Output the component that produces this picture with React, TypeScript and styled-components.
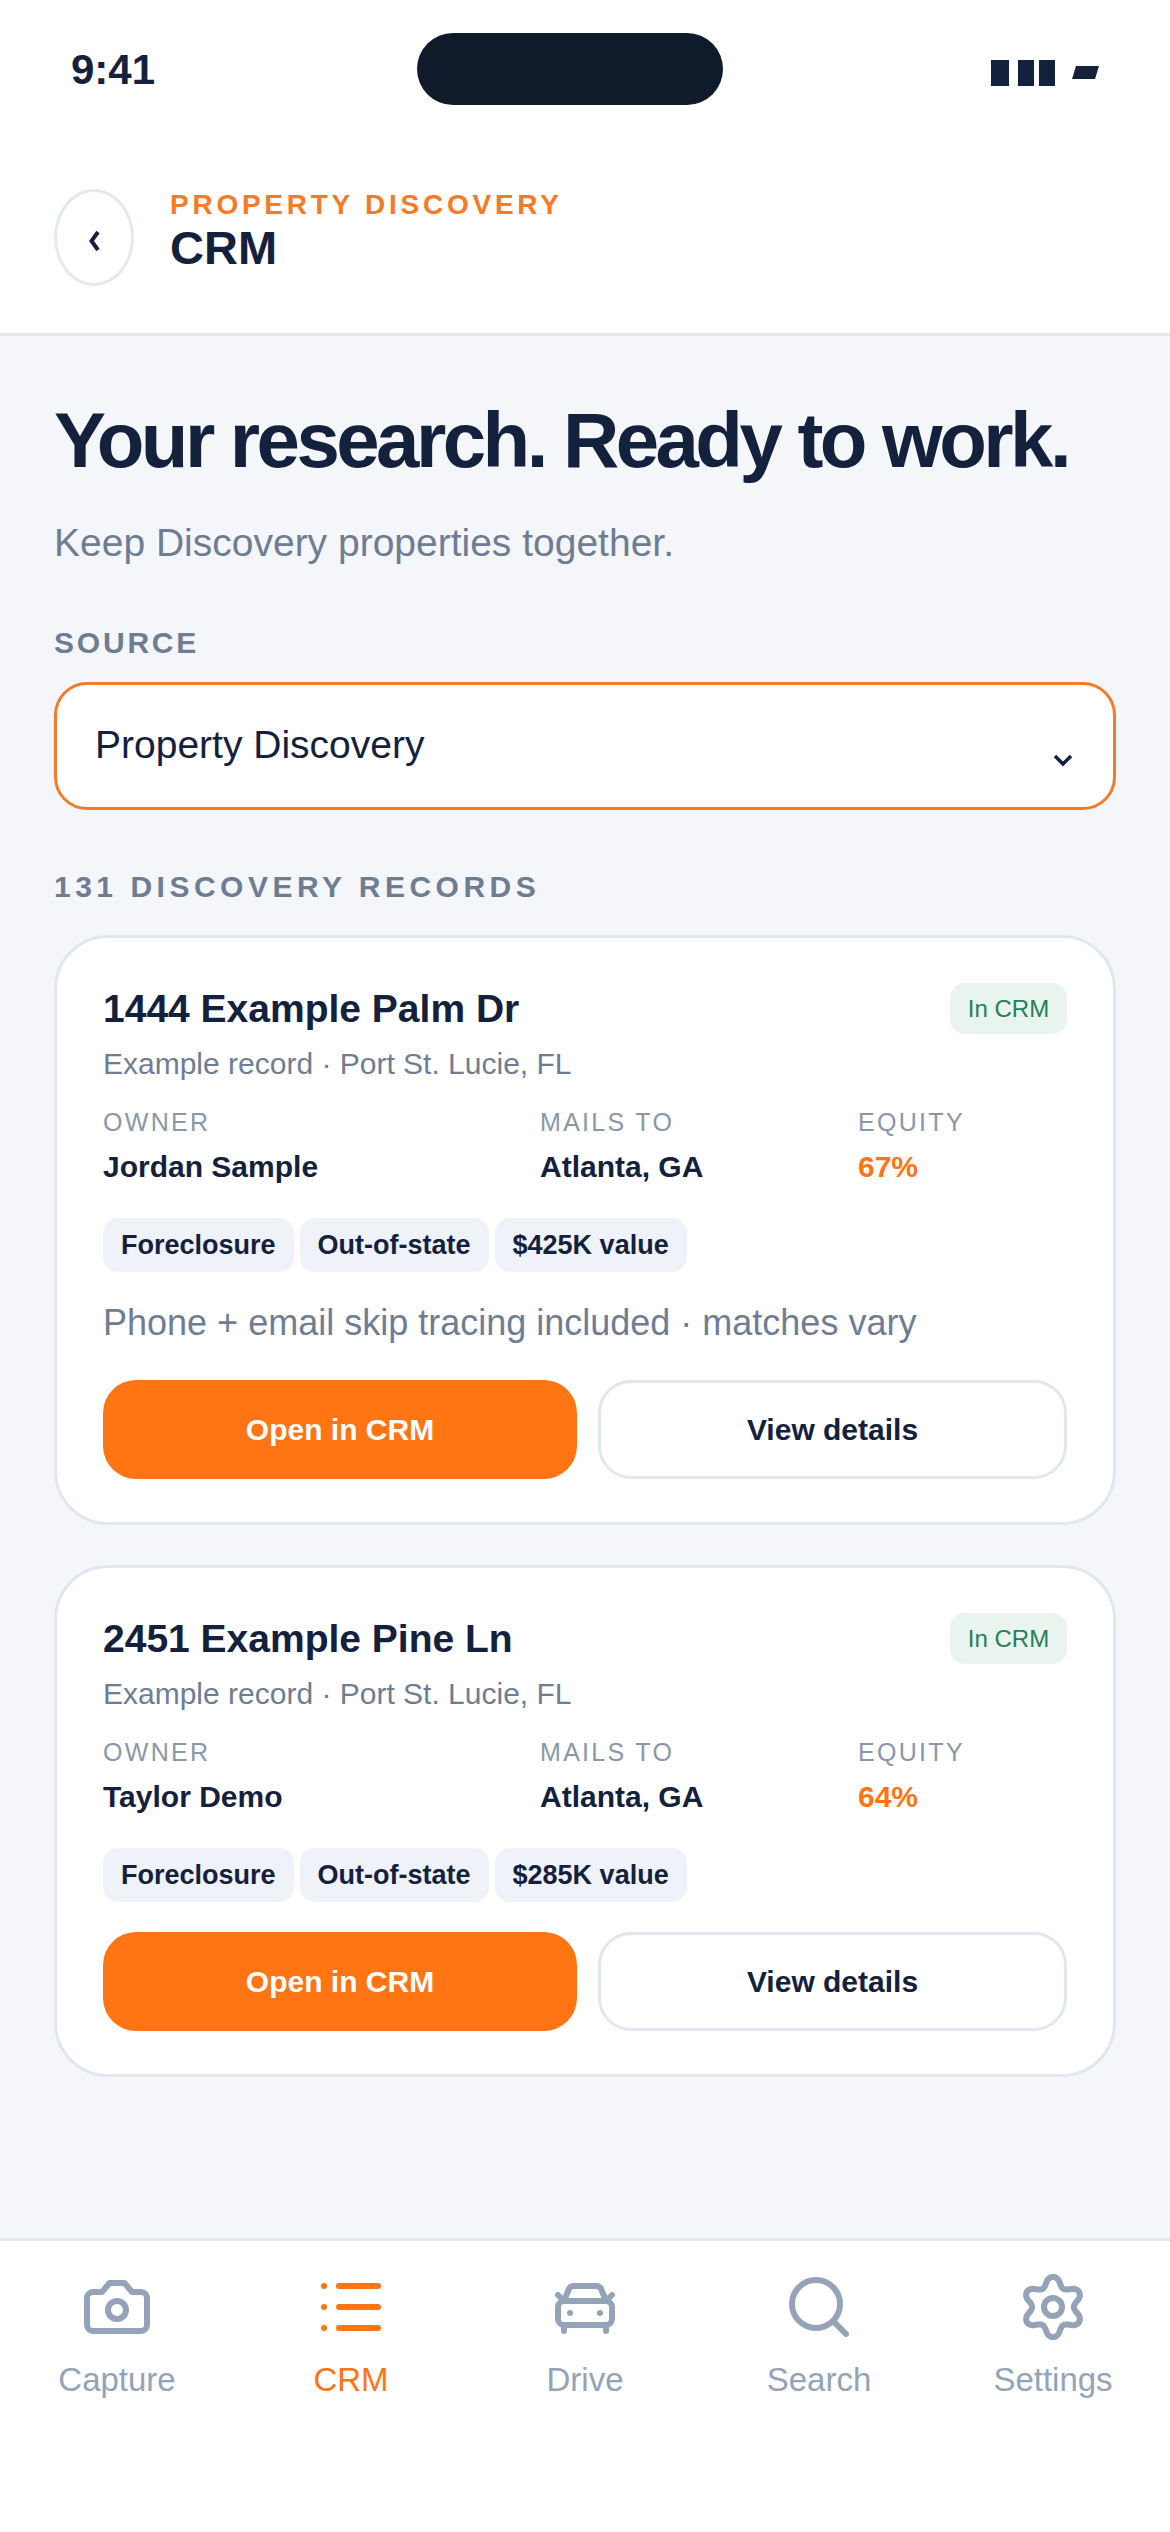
import React from "react";
import styled, { createGlobalStyle } from "styled-components";
import { List, CarFront, Search } from "lucide-react";

const Global = createGlobalStyle`
  * { box-sizing: border-box; }
  html, body { margin: 0; padding: 0; background: #ffffff; }
  body { font-family: "Liberation Sans", Arial, sans-serif; }
`;

const navy = "#14213d";
const orange = "#ff7413";

const Screen = styled.div`
  width: 1170px;
  height: 2532px;
  display: flex;
  flex-direction: column;
  background: #f4f6fa;
  color: ${navy};
  overflow: hidden;
`;

const StatusBar = styled.div`
  height: 117px;
  flex: none;
  background: #fff;
  padding: 33px 71px 0;
  display: grid;
  grid-template-columns: 346px 306px 1fr;
  align-items: start;
`;

const Time = styled.div`
  font-size: 42px;
  line-height: 72px;
  font-weight: 700;
  margin-top: 1px;
`;

const Island = styled.div`
  height: 72px;
  border-radius: 36px;
  background: #0f1a2b;
`;

const StatusIcons = styled.div`
  display: flex;
  justify-content: flex-end;
  padding-top: 27px;
`;

const Signal = styled.svg`
  display: block;
`;

const Header = styled.header`
  height: 219px;
  flex: none;
  background: #fff;
  border-bottom: 3px solid #e4e9f0;
  padding: 72px 54px 0;
  display: flex;
  gap: 36px;
  align-items: flex-start;
`;

const BackButton = styled.button`
  width: 80px;
  height: 97px;
  border-radius: 50%;
  border: 3px solid #e4e9f0;
  background: #fff;
  padding: 7px 0 0;
  display: flex;
  align-items: center;
  justify-content: center;
  flex: none;
  color: ${navy};
`;

const HeaderText = styled.div`
  display: flex;
  flex-direction: column;
`;

const Kicker = styled.div`
  font-size: 28px;
  line-height: 32px;
  font-weight: 700;
  letter-spacing: 3.75px;
  color: #f47b27;
`;

const HeaderTitle = styled.div`
  font-size: 47px;
  line-height: 54px;
  font-weight: 700;
`;

const Main = styled.main`
  flex: 1;
  padding: 0 54px;
  display: flex;
  flex-direction: column;
`;

const Heading = styled.h1`
  margin: 60px 0 0;
  font-size: 78px;
  line-height: 88px;
  letter-spacing: -3.55px;
  font-weight: 700;
  white-space: nowrap;
`;

const Lead = styled.p`
  margin: 36px 0 0;
  font-size: 39px;
  line-height: 46px;
  color: #6f7d94;
`;

const SectionLabel = styled.div<{ $wide?: boolean }>`
  font-size: 30px;
  line-height: 36px;
  font-weight: 700;
  letter-spacing: ${(p) => (p.$wide ? "4.5px" : "2.8px")};
  color: #6f7d94;
`;

const SourceLabel = styled(SectionLabel)`
  margin-top: 59px;
`;

const RecordsLabel = styled(SectionLabel)`
  margin-top: 59px;
`;

const SelectBox = styled.div`
  margin-top: 21px;
  height: 128px;
  border: 3px solid #f47b27;
  border-radius: 33px;
  background: #fff;
  padding: 0 40px 0 38px;
  display: flex;
  align-items: center;
  justify-content: space-between;
  font-size: 39px;
  color: ${navy};
`;

const SelectValue = styled.span`
  margin-bottom: 2px;
`;

const SelectArrow = styled.svg`
  margin-top: 28px;
`;

const Card = styled.article`
  background: #fff;
  border: 3px solid #e1e6ef;
  border-radius: 54px;
  padding: 45px 46px 43px 46px;
  margin-top: 40px;
`;

const FirstCard = styled(Card)`
  margin-top: 30px;
`;

const CardTop = styled.div`
  display: flex;
  justify-content: space-between;
  align-items: flex-start;
`;

const Address = styled.h2`
  margin: 3px 0 0;
  font-size: 39px;
  line-height: 46px;
  font-weight: 700;
`;

const Badge = styled.span`
  width: 117px;
  height: 51px;
  border-radius: 15px;
  background: #e8f4ed;
  color: #24805a;
  font-size: 24px;
  display: flex;
  align-items: center;
  justify-content: center;
`;

const Subline = styled.div`
  margin-top: 12px;
  font-size: 30px;
  line-height: 36px;
  color: #6f7d94;
`;

const Stats = styled.div`
  margin-top: 25px;
  display: grid;
  grid-template-columns: 437px 318px 1fr;
`;

const Stat = styled.div`
  display: flex;
  flex-direction: column;
`;

const StatLabel = styled.span`
  font-size: 25px;
  line-height: 30px;
  letter-spacing: 2.3px;
  color: #8a96a9;
`;

const StatValue = styled.span<{ $accent?: boolean }>`
  margin-top: 12px;
  font-size: 30px;
  line-height: 36px;
  font-weight: 700;
  color: ${(p) => (p.$accent ? orange : navy)};
`;

const Chips = styled.div`
  margin-top: 33px;
  display: flex;
  gap: 6px;
`;

const Chip = styled.span`
  height: 54px;
  border-radius: 15px;
  background: #eff2f8;
  padding: 0 18px;
  font-size: 27px;
  font-weight: 700;
  display: flex;
  align-items: center;
`;

const Note = styled.p`
  margin: 28px 0 0;
  font-size: 36px;
  line-height: 46px;
  color: #6f7d94;
`;

const Actions = styled.div<{ $tight?: boolean }>`
  margin-top: ${(p) => (p.$tight ? "30px" : "34px")};
  display: grid;
  grid-template-columns: 474px 1fr;
  gap: 21px;
`;

const PrimaryButton = styled.button`
  height: 99px;
  border: 0;
  border-radius: 33px;
  background: ${orange};
  color: #fff;
  font: 700 30px "Liberation Sans", Arial, sans-serif;
`;

const SecondaryButton = styled.button`
  height: 99px;
  border: 3px solid #e1e6ef;
  border-radius: 33px;
  background: #fff;
  color: ${navy};
  font: 700 30px "Liberation Sans", Arial, sans-serif;
`;

const BottomNav = styled.nav`
  height: 294px;
  flex: none;
  background: #fff;
  border-top: 3px solid #e4e9f0;
  display: grid;
  grid-template-columns: repeat(5, 1fr);
  padding-top: 30px;
`;

const NavItem = styled.div<{ $active?: boolean }>`
  display: flex;
  flex-direction: column;
  align-items: center;
  color: ${(p) => (p.$active ? orange : "#94a3b8")};
`;

const NavLabel = styled.span`
  margin-top: 17px;
  font-size: 33px;
  line-height: 40px;
`;

const gearPath = (() => {
  const pts: string[] = [];
  for (let i = 0; i < 120; i++) {
    const a = (i / 120) * Math.PI * 2;
    const c = Math.cos(6 * (a + Math.PI / 2));
    const r = 8.5 + 1.55 * Math.sign(c) * Math.pow(Math.abs(c), 0.8);
    pts.push(`${(12 + r * Math.cos(a)).toFixed(2)} ${(12 + r * Math.sin(a)).toFixed(2)}`);
  }
  return `M${pts.join("L")}Z`;
})();

function CameraIcon() {
  return (
    <svg width="72" height="72" viewBox="0 0 24 24" fill="none" stroke="currentColor" strokeWidth="2" strokeLinecap="round" strokeLinejoin="round">
      <path d="M14.5 4h-5L7 7H4a2 2 0 0 0-2 2v9a2 2 0 0 0 2 2h16a2 2 0 0 0 2-2V9a2 2 0 0 0-2-2h-3l-2.5-3z" />
      <circle cx="12" cy="13" r="3" />
    </svg>
  );
}

function GearIcon() {
  return (
    <svg width="72" height="72" viewBox="0 0 24 24" fill="none" stroke="currentColor" strokeWidth="2" strokeLinecap="round" strokeLinejoin="round">
      <path d={gearPath} />
      <circle cx="12" cy="12" r="3" />
    </svg>
  );
}

type Rec = {
  address: string;
  owner: string;
  equity: string;
  value: string;
  note?: string;
};

const records: Rec[] = [
  {
    address: "1444 Example Palm Dr",
    owner: "Jordan Sample",
    equity: "67%",
    value: "$425K value",
    note: "Phone + email skip tracing included · matches vary",
  },
  {
    address: "2451 Example Pine Ln",
    owner: "Taylor Demo",
    equity: "64%",
    value: "$285K value",
  },
];

const navItems = [
  { label: "Capture", icon: <CameraIcon /> },
  { label: "CRM", icon: <List size={72} strokeWidth={2} />, active: true },
  { label: "Drive", icon: <CarFront size={72} strokeWidth={2} /> },
  { label: "Search", icon: <Search size={72} strokeWidth={2} /> },
  { label: "Settings", icon: <GearIcon /> },
];

function RecordBody({ r }: { r: Rec }) {
  return (
    <>
      <CardTop>
        <Address>{r.address}</Address>
        <Badge>In CRM</Badge>
      </CardTop>
      <Subline>Example record · Port St. Lucie, FL</Subline>
      <Stats>
        <Stat>
          <StatLabel>OWNER</StatLabel>
          <StatValue>{r.owner}</StatValue>
        </Stat>
        <Stat>
          <StatLabel>MAILS TO</StatLabel>
          <StatValue>Atlanta, GA</StatValue>
        </Stat>
        <Stat>
          <StatLabel>EQUITY</StatLabel>
          <StatValue $accent>{r.equity}</StatValue>
        </Stat>
      </Stats>
      <Chips>
        <Chip>Foreclosure</Chip>
        <Chip>Out-of-state</Chip>
        <Chip>{r.value}</Chip>
      </Chips>
      {r.note && <Note>{r.note}</Note>}
      <Actions $tight={!r.note}>
        <PrimaryButton>Open in CRM</PrimaryButton>
        <SecondaryButton>View details</SecondaryButton>
      </Actions>
    </>
  );
}

export default function App() {
  return (
    <Screen>
      <Global />
      <StatusBar>
        <Time>9:41</Time>
        <Island />
        <StatusIcons>
          <Signal width="108" height="26" viewBox="0 0 108 26" fill={navy}>
            <rect x="0" y="0" width="18" height="26" />
            <rect x="27" y="0" width="16" height="26" />
            <rect x="48" y="0" width="16" height="26" />
            <polygon points="85,6 108,6 104,19 81,19" />
          </Signal>
        </StatusIcons>
      </StatusBar>
      <Header>
        <BackButton aria-label="Back">
          <svg width="12" height="22" viewBox="0 0 12 22" fill="none" stroke={navy} strokeWidth="4">
            <path d="M10 2 3.5 11l6.5 9" />
          </svg>
        </BackButton>
        <HeaderText>
          <Kicker>PROPERTY DISCOVERY</Kicker>
          <HeaderTitle>CRM</HeaderTitle>
        </HeaderText>
      </Header>
      <Main>
        <Heading>Your research. Ready to work.</Heading>
        <Lead>Keep Discovery properties together.</Lead>
        <SourceLabel>SOURCE</SourceLabel>
        <SelectBox>
          <SelectValue>Property Discovery</SelectValue>
          <SelectArrow width="20" height="13" viewBox="0 0 20 13" fill="none" stroke={navy} strokeWidth="3.5">
            <path d="m2 2 8 8 8-8" />
          </SelectArrow>
        </SelectBox>
        <RecordsLabel $wide>131 DISCOVERY RECORDS</RecordsLabel>
        <FirstCard>
          <RecordBody r={records[0]} />
        </FirstCard>
        <Card>
          <RecordBody r={records[1]} />
        </Card>
      </Main>
      <BottomNav>
        {navItems.map(({ label, icon, active }) => (
          <NavItem key={label} $active={active}>
            {icon}
            <NavLabel>{label}</NavLabel>
          </NavItem>
        ))}
      </BottomNav>
    </Screen>
  );
}
